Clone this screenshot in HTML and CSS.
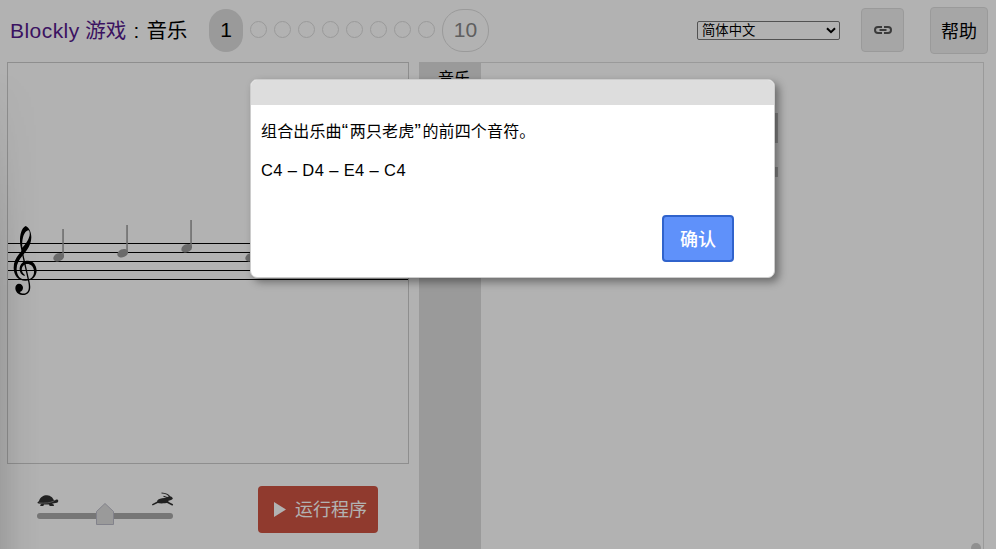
FILE: index.html
```html
<!DOCTYPE html>
<html lang="zh-Hans">
<head>
<meta charset="utf-8">
<title>Blockly 游戏 : 音乐</title>
<link rel="stylesheet" href="styles.css">
</head>
<body>
<header class="header">
  <h1 class="title"><a class="home"><span class="latin">Blockly</span> 游戏</a><span class="colon">:</span><span>音乐</span></h1>
  <nav class="levels">
    <span class="level current">1</span>
    <span class="dot"></span><span class="dot"></span><span class="dot"></span><span class="dot"></span>
    <span class="dot"></span><span class="dot"></span><span class="dot"></span><span class="dot"></span>
    <span class="level last">10</span>
  </nav>
  <div class="tools">
    <div class="language"><span>简体中文</span><svg width="10" height="7" viewBox="0 0 10 7"><path d="M1 1.2 5 5.2 9 1.2" fill="none" stroke="#000" stroke-width="2"/></svg></div>
    <div class="button link"><svg width="20" height="10" viewBox="0 0 20 10"><path fill="none" stroke="#555" stroke-width="2" d="M9 2H5a3 3 0 0 0 0 6H9M11 2h4a3 3 0 0 1 0 6H11M6.500 5h7"/></svg></div>
    <div class="button help">帮助</div>
  </div>
</header>
<main class="main">
  <section class="left">
    <div class="staff">
      <svg width="400" height="400" viewBox="8 63 400 400">
        <path d="M8 243.500h400M8 252.500h400M8 261.500h400M8 270.500h400M8 279.500h400" stroke="#000" stroke-width="1"/>
        <g transform="translate(0 200) scale(.3333)">
          <path fill-rule="evenodd" d="M77 78C88 82 94 98 94 112C93 135 83 149 69 165C56 180 49 194 50 209C51 228 62 239 77 239C94 239 103 228 102 213C101 199 92 192 82 192C70 192 63 203 66 213C68 220 72 223 75 225L73 228C62 224 58 214 59 204C61 190 71 182 84 182C100 182 110 197 110 212C109 231 95 242 76 242C55 242 41 226 41 203C41 183 50 169 65 153C60 135 58 118 62 101C65 89 71 80 77 78ZM82 92C72 96 65 115 67 143C80 129 91 111 89 98C88 91 86 90 82 92Z"/>
          <path d="M66 145 88 242C91 254 92 264 89 272C84 283 75 285 67 285C53 284 46 274 46 264C46 256 51 251 57 251C64 251 69 256 69 263C69 270 65 274 59 276C64 281 72 282 78 279C87 275 88 263 85 247L64 154Z"/>
        </g>
        <g fill="#999">
          <g id="n1"><ellipse cx="58.700" cy="257.200" rx="5.600" ry="4" transform="rotate(-24 58.700 257.200)"/><path d="M62.300 229h1.500v27h-1.500z"/></g>
          <use href="#n1" x="64" y="-4"/>
          <use href="#n1" x="128" y="-9"/>
          <use href="#n1" x="192"/>
        </g>
      </svg>
    </div>
    <div class="controls">
      <svg class="speed" width="150" height="40" viewBox="30 488 150 40">
        <path d="M40 516h130" stroke="#a9a9a9" stroke-width="6" stroke-linecap="round"/>
        <path d="M96.500 524.500v-13l8.500-8 8.500 8v13z" fill="#ddd" stroke="#bbbbc8"/>
        <g fill="#303030">
          <path d="M39 501C40 497 44 495 47 495.200C51 495.500 53 498 54 500.500L55.300 500.300C55.500 499.300 58.300 499.300 58.300 501C58.200 503 56 503 54 503.300L52 503.800 54 504.800 53.800 505.900H49.700L49 504.400H44L43.300 506H40.300V504.700L41.700 503.800C39.500 503.900 38 503.500 37.300 502.700L38 502Z"/>
          <path d="M157 501C158.500 498.500 162 497.800 165.500 498L168.500 496.500C170 495.800 172 496.500 172.900 498.500C172 500.300 170 500.300 168.700 500.600L168 502.600C165 503.600 160 503.800 157.500 503Z"/>
        </g>
        <g fill="none" stroke="#303030">
          <path d="M158 502 152.300 504.900M167 502 172.800 505" stroke-width="1.500"/>
          <path d="M170 497C168.500 494.500 165 493.200 161.500 493M168.500 498 163.500 496.200" stroke-width="1.200"/>
        </g>
        <path d="M39 503C45 503.400 50 503 54 501" fill="none" stroke="#999" stroke-width=".7"/>
      </svg>
      <div class="run"><svg width="12" height="15" viewBox="0 0 12 15"><path d="M0 0 12 7.500 0 15Z"/></svg><span>运行程序</span></div>
    </div>
  </section>
  <section class="workspace">
    <div class="toolbox">音乐</div>
    <div class="canvas"></div>
  </section>
</main>
<div class="edge"></div>
<div class="shade"></div>
<div class="block-end one"></div>
<div class="block-end two"></div>
<div class="scroll-end"></div>
<div class="dialog" role="dialog">
  <div class="bar"></div>
  <div class="content">
    <p>组合出乐曲<span class="quote">“</span>两只老虎<span class="quote">”</span>的前四个音符。</p>
    <p class="notes">C4 – D4 – E4 – C4</p>
    <div class="ok">确认</div>
  </div>
</div>
</body>
</html>
```
FILE: styles.css
```css
* { box-sizing: border-box; }
body { margin: 0; height: 549px; overflow: hidden; background: #fff; color: #000; font-family: "Liberation Sans", "Noto Sans CJK SC", sans-serif; }
.header { height: 62px; display: flex; align-items: center; padding: 0 8px 2px 10px; }
.title { width: 199px; margin: 0; padding-bottom: 2px; font-size: 20.5px; font-weight: 400; white-space: nowrap; }
.latin { font-size: 21px; letter-spacing: .45px; }
.home { color: #551a8b; }
.colon { display: inline-block; width: 20px; text-align: center; }
.levels { display: flex; align-items: center; }
.level { height: 43px; border-radius: 21px; font-size: 21px; display: grid; place-items: center; }
.current { width: 34px; background: #ddd; margin-right: 7px; border-radius: 17px; }
.last { width: 47px; border: 1px solid #ddd; color: #888; }
.dot { width: 17px; height: 17px; border: 1px solid #ddd; border-radius: 50%; margin-right: 7px; margin-top: -1px; }
.tools { display: flex; align-items: center; margin-left: auto; }
.language { width: 143px; height: 19px; border: 1px solid #767676; border-radius: 2px; font-size: 13.333px; line-height: 17px; display: flex; align-items: center; justify-content: space-between; padding: 0 3px 0 4px; margin-right: 21px; }
.button { border: 1px solid #ddd; border-radius: 4px; background: #eee; display: grid; place-items: center; }
.link { width: 43px; height: 44px; margin-right: 26px; }
.help { width: 58px; height: 47px; font-size: 18px; }
.main { display: flex; height: 487px; padding-left: 7px; }
.left { width: 412px; }
.staff { width: 402px; height: 402px; border: 1px solid #ccc; }
.staff svg { display: block; }
.controls { display: flex; padding: 22px 0 0 23px; }
.speed { margin-top: 2px; }
.run { width: 120px; height: 47px; margin-left: 78px; border-radius: 4px; background: #cf5342; color: #fff; font-size: 18px; display: flex; align-items: center; padding-left: 16px; gap: 9px; }
.run svg { fill: #fff; }
.run span { padding-bottom: 3px; }
.workspace { width: 565px; display: flex; border: 1px solid #ddd; border-width: 1px 1px 0 0; }
.toolbox { width: 62px; background: #ddd; font-size: 16px; line-height: 22px; padding: 5px 0 0 19px; }
.canvas { flex: 1; }
.edge { position: absolute; left: 0; top: 70px; width: 40px; height: 479px; background: linear-gradient(90deg, rgba(0,0,0,.11), rgba(0,0,0,.03) 50%, transparent); mask-image: linear-gradient(transparent, #000 220px); }
.shade { position: absolute; inset: 0; background: rgba(0,0,0,.3); }
.block-end { position: absolute; left: 770px; width: 8px; background: #888; }
.one { top: 113px; height: 30px; }
.two { top: 167px; height: 10px; }
.scroll-end { position: absolute; left: 971px; top: 543px; width: 10px; height: 10px; border-radius: 50%; background: #909090; }
.dialog { position: absolute; left: 250px; top: 79px; width: 525px; height: 199px; border: 1px solid #ccc; border-radius: 7px; overflow: hidden; background: #fff; box-shadow: 4px 4px 8px rgba(0,0,0,.4); }
.bar { height: 25px; background: #ddd; }
.content { padding: 15px 40px 0 10px; display: flex; flex-direction: column; font-size: 16px; }
.content p { margin: 0; line-height: 24px; white-space: nowrap; letter-spacing: .15px; }
.quote { display: inline-block; width: 8px; font-size: 19px; line-height: 16px; }
.content .notes { margin-top: 14px; font-size: 16.5px; letter-spacing: .38px; }
.ok { align-self: flex-end; width: 72px; height: 47px; margin-top: 33px; padding-bottom: 2px; border: 2px solid #3063cc; border-radius: 4px; background: #5f91fa; color: #fff; font-size: 18px; font-weight: 500; display: grid; place-items: center; }
```
